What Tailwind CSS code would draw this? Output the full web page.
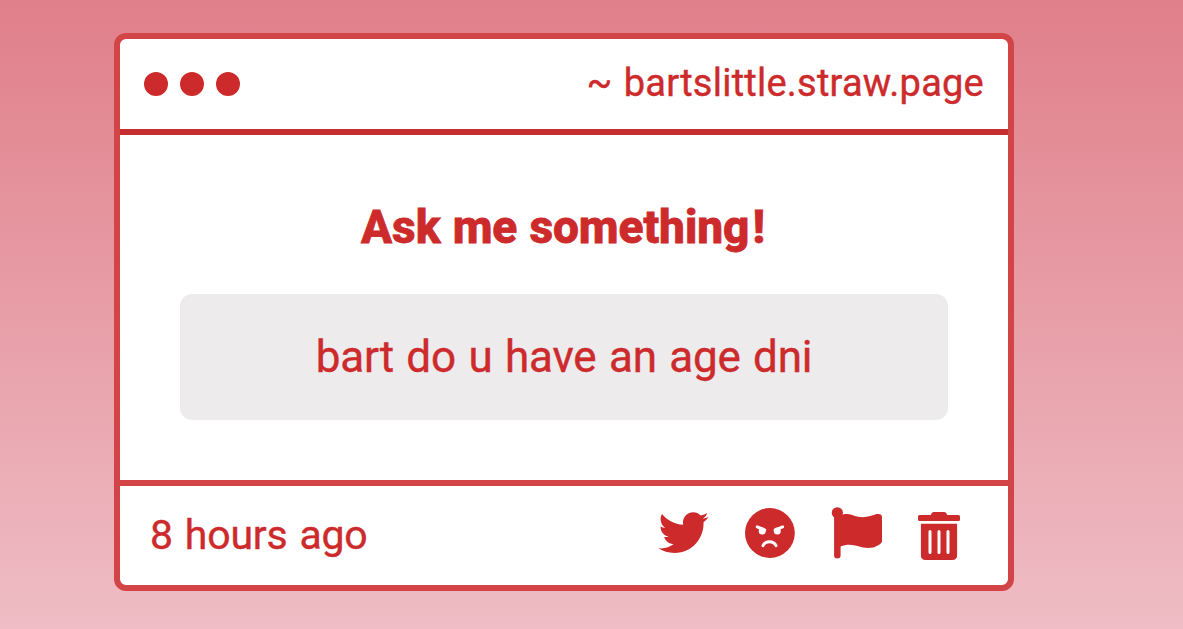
<!doctype html>
<html lang="en">
<head>
  <meta charset="UTF-8">
  <meta name="viewport" content="width=device-width, initial-scale=1.0">
  <title>Ask me something!</title>
  <script src="https://cdn.jsdelivr.net/npm/@tailwindcss/browser@4"></script>
</head>
<body class="h-screen overflow-hidden bg-linear-to-b/srgb from-[#e07f8a] to-[#efbdc5] font-[Roboto,sans-serif] text-[#cd2a2c] pt-[33px] pl-[114px]">

  <!-- Window -->
  <main class="w-[900px] h-[558px] flex flex-col border-6 border-[#d24446] rounded-xl bg-white overflow-hidden">

    <!-- Title bar -->
    <header class="h-24 shrink-0 flex items-center justify-between px-6 border-b-6 border-[#c82d30]">
      <div class="flex gap-3">
        <span class="size-6 rounded-full bg-[#cd2a2c]"></span>
        <span class="size-6 rounded-full bg-[#cd2a2c]"></span>
        <span class="size-6 rounded-full bg-[#cd2a2c]"></span>
      </div>
      <p class="pb-0.5 text-[38px] leading-none tracking-[0.23px] [word-spacing:1.6px] [-webkit-text-stroke:0.4px] whitespace-nowrap">~ bartslittle.straw.page</p>
    </header>

    <!-- Question -->
    <section class="flex-1 px-15 pt-[65px] text-center">
      <h1 class="pr-0.5 text-[46px] leading-[54px] font-extrabold tracking-[-0.05px] [word-spacing:0.8px] [-webkit-text-stroke:0.8px]">Ask me something<span class="ml-[3px]">!</span></h1>
      <p class="mt-10 h-[126px] flex items-center justify-center rounded-xl bg-[#edebec] text-[44px] leading-none tracking-[-0.2px] [word-spacing:1.8px] [-webkit-text-stroke:0.4px]">bart do u have an age dni</p>
    </section>

    <!-- Time and actions -->
    <footer class="h-[105px] shrink-0 flex items-center justify-between pl-[30px] pr-12 border-t-6 border-[#d24446]">
      <p class="text-[41px] leading-none tracking-[-0.2px] [word-spacing:2px] [-webkit-text-stroke:0.4px]">8 hours ago</p>
      <div class="flex">
        <svg class="w-[50px] h-[55px] mr-[37px] overflow-visible" viewBox="0 0 50 55" fill="currentColor">
          <path transform="translate(0.5 -0.5) scale(0.098)" d="M459.37 151.716c.325 4.548.325 9.097.325 13.645 0 138.72-105.583 298.558-298.558 298.558-59.452 0-114.68-17.219-161.137-47.106 8.447.974 16.568 1.299 25.34 1.299 49.055 0 94.213-16.568 130.274-44.832-46.132-.975-84.792-31.188-98.112-72.772 6.498.974 12.995 1.624 19.818 1.624 9.421 0 18.843-1.3 27.614-3.573-48.081-9.747-84.143-51.98-84.143-102.985v-1.299c13.969 7.797 30.214 12.67 47.431 13.319-28.264-18.843-46.781-51.005-46.781-87.391 0-19.492 5.197-37.36 14.294-52.954 51.655 63.675 129.3 105.258 216.365 109.807-1.624-7.797-2.599-15.918-2.599-24.04 0-57.828 46.782-104.934 104.934-104.934 30.213 0 57.502 12.67 76.67 33.137 23.715-4.548 46.456-13.32 66.599-25.34-7.798 24.366-24.366 44.833-46.132 57.827 21.117-2.273 41.584-8.122 60.426-16.243-14.292 20.791-32.161 39.308-52.628 54.253z"/>
        </svg>
        <svg class="w-[50px] h-[55px] mr-[37px]" viewBox="0 0 50 55" fill="none">
          <circle cx="24.900" cy="25" r="24.900" fill="currentColor"/>
          <g stroke="white" stroke-width="2.900" stroke-linecap="round">
            <path d="M12.200 18.800l7.600 3.200M37.600 18.800l-7.600 3.200"/>
            <path d="M18 37.600c2.600-5.100 10.400-5.100 13 0" stroke-width="3"/>
          </g>
          <circle cx="17.200" cy="23" r="3.500" fill="white"/>
          <circle cx="32.300" cy="23" r="3.500" fill="white"/>
        </svg>
        <svg class="w-[50px] h-[55px] mr-9 overflow-visible" viewBox="0 0 50 55" fill="currentColor">
          <circle cx="5.350" cy="4.800" r="5.600"/>
          <path d="M2.100 5h6.500v42.300a3.200 3.200 0 0 1-6.500 0z"/>
          <path d="M8 7.600c8.500-3.600 11.500-.1 18 1.200 8.500 1.300 14-1.500 18.500-2.700 3.500-.7 5.500.6 5.500 2.800v24.500c0 1.800-5 5.300-11 6.400-12 1.200-18-6.600-31-1z"/>
        </svg>
        <svg class="w-[42px] h-[55px]" viewBox="0 0 42 55" fill="currentColor">
          <path d="M1.500 6.900h11.300c.7-2 1.600-3 3-3h10.400c1.400 0 2.300 1 3 3h11.300a1.500 1.500 0 0 1 1.500 1.500v3a1.500 1.500 0 0 1-1.500 1.500h-39a1.500 1.500 0 0 1-1.500-1.500v-3a1.500 1.500 0 0 1 1.500-1.500z"/>
          <path d="M2.900 15.700h36.200v32a4.300 4.300 0 0 1-4.300 4.300h-27.600a4.300 4.300 0 0 1-4.300-4.300z"/>
          <path d="M12 23.500v21M21 23.500v21M30 23.500v21" stroke="white" stroke-width="3" stroke-linecap="round"/>
        </svg>
      </div>
    </footer>

  </main>

</body>
</html>
